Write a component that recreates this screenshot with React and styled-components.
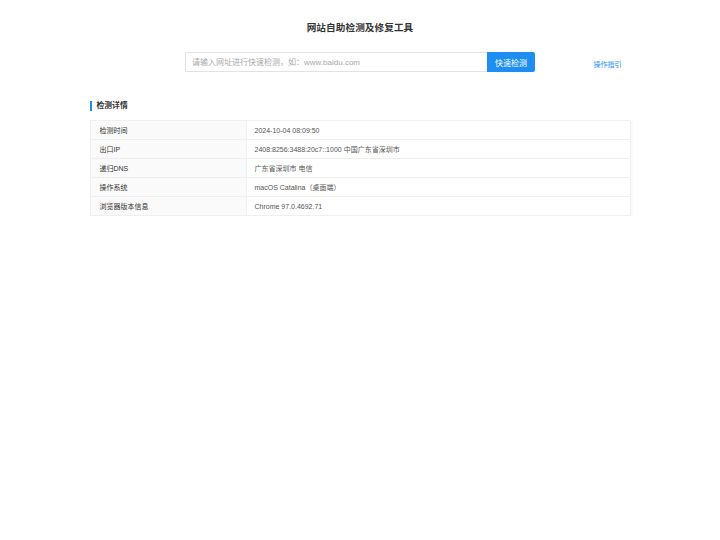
import React from "react";
import styled, { createGlobalStyle } from "styled-components";

const GlobalStyle = createGlobalStyle`
  html, body {
    margin: 0;
    padding: 0;
    background: #fff;
    font-family: "Liberation Sans", "Noto Sans CJK SC", sans-serif;
    color: #333;
  }
`;

const Page = styled.div`
  width: 541px;
  margin: 0 auto;
  padding-top: 21px;
`;
const Title = styled.h1`
  margin: 0;
  text-align: center;
  font-size: 9.6px;
  line-height: 14px;
  font-weight: bold;
  letter-spacing: 0.1px;
  color: #333;
`;
const SearchRow = styled.div`
  display: grid;
  grid-template-columns: 1fr auto 1fr;
  align-items: center;
  margin-top: 17px;
`;
const SearchBox = styled.div`
  grid-column: 2;
  display: flex;
  height: 20px;
`;
const Input = styled.input`
  width: 302px;
  box-sizing: border-box;
  height: 20px;
  border: 1px solid #e2e2e2;
  border-right: none;
  border-radius: 2px 0 0 2px;
  padding: 0 6px;
  font-family: inherit;
  font-size: 8px;
  color: #333;
  outline: none;
  &::placeholder {
    color: #a8a8a8;
  }
`;
const SearchButton = styled.button`
  width: 48px;
  height: 20px;
  border: none;
  border-radius: 0 2px 2px 0;
  background: #1e8ef0;
  color: #fff;
  font-family: inherit;
  font-size: 8px;
  padding: 0;
  cursor: pointer;
`;
const GuideLink = styled.a`
  grid-column: 3;
  justify-self: end;
  margin-right: 9px;
  margin-top: 4px;
  font-size: 7px;
  color: #1e8ef0;
  text-decoration: none;
`;
const SectionTitle = styled.h2`
  margin: 29px 0 0;
  padding-left: 5px;
  border-left: 2px solid #1e8ef0;
  font-size: 7.8px;
  line-height: 10px;
  font-weight: bold;
  color: #333;
`;
const Table = styled.table`
  width: 100%;
  margin-top: 9px;
  border-collapse: collapse;
  border: 1px solid #efefef;
  box-shadow: 1px 1px 2px rgba(0, 0, 0, 0.04);
  font-size: 7px;
`;
const Row = styled.tr`
  border-bottom: 1px solid #efefef;
  height: 19px;
`;
const Label = styled.td`
  width: 156px;
  box-sizing: border-box;
  padding: 0 0 0 9px;
  background: #fafafa;
  border-right: 1px solid #efefef;
  color: #333;
`;
const Value = styled.td`
  padding: 0 0 0 8px;
  color: #555;
`;

const rows = [
  ["检测时间", "2024-10-04 08:09:50"],
  ["出口IP", "2408:8256:3488:20c7::1000 中国广东省深圳市"],
  ["递归DNS", "广东省深圳市 电信"],
  ["操作系统", "macOS Catalina（桌面端）"],
  ["浏览器版本信息", "Chrome 97.0.4692.71"],
];

export default function App() {
  return (
    <>
      <GlobalStyle />
      <Page>
        <Title>网站自助检测及修复工具</Title>
        <SearchRow>
          <SearchBox>
            <Input placeholder="请输入网址进行快速检测，如：www.baidu.com" />
            <SearchButton>快速检测</SearchButton>
          </SearchBox>
          <GuideLink href="#">操作指引</GuideLink>
        </SearchRow>
        <SectionTitle>检测详情</SectionTitle>
        <Table>
          <tbody>
            {rows.map(([k, v]) => (
              <Row key={k}>
                <Label>{k}</Label>
                <Value>{v}</Value>
              </Row>
            ))}
          </tbody>
        </Table>
      </Page>
    </>
  );
}
